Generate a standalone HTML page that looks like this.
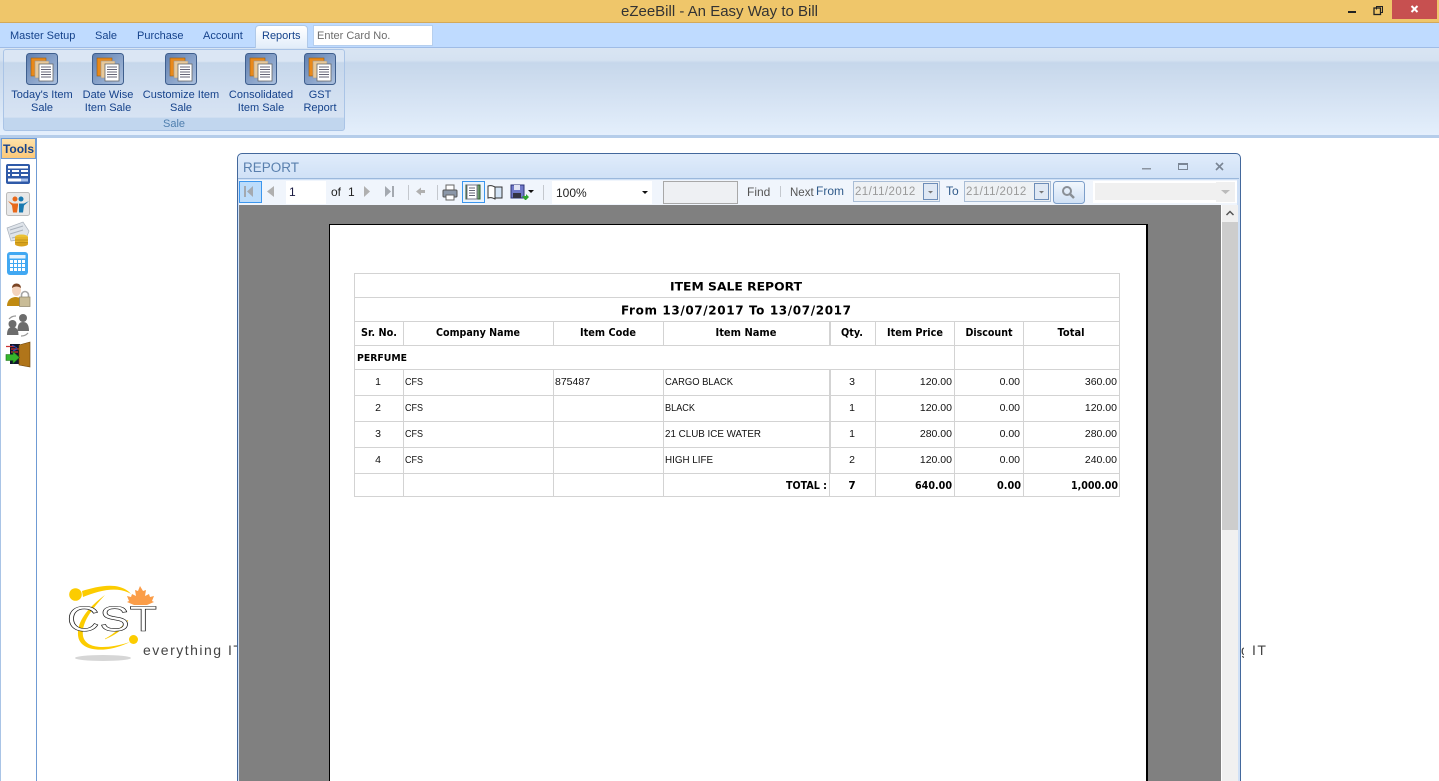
<!DOCTYPE html>
<html><head><meta charset="utf-8"><title>eZeeBill</title>
<style>
html,body{margin:0;padding:0;width:1439px;height:781px;overflow:hidden;background:#fff}
body{position:relative;font-family:"Liberation Sans",sans-serif}
.a{position:absolute}
.t{position:absolute;white-space:nowrap}
svg{position:absolute;left:0;top:0}
text{font-family:"Liberation Sans",sans-serif}
.dj text,text.dj{font-family:"DejaVu Sans",sans-serif}
</style></head><body>
<div class="a" style="left:0;top:0;width:1439px;height:22px;background:#efc66a"></div>
<div class="a" style="left:0;top:22px;width:1439px;height:1px;background:#d3a95a"></div>
<div class="t" style="left:0;width:1439px;top:3px;text-align:center;font-size:15px;color:#333">eZeeBill - An Easy Way to Bill</div>
<div class="a" style="left:1392px;top:0;width:45px;height:19px;background:#c75050"></div>
<div class="a" style="left:0;top:23px;width:1439px;height:24px;background:#bfdbff"></div>
<div class="a" style="left:0;top:47px;width:1439px;height:88px;background:linear-gradient(#d9e5f3 0,#d5e2f1 14%,#c6d7eb 17%,#d2e0f1 50%,#e4effc 100%);border-top:1px solid #9fbce6;box-sizing:border-box"></div>
<div class="a" style="left:255px;top:25px;width:53px;height:23px;box-sizing:border-box;background:linear-gradient(#fff,#e2edfa);border:1px solid #b0c9e8;border-bottom:0;border-radius:4px 4px 0 0"></div>
<div class="t" style="left:10px;top:30px;font-size:11px;color:#15428b">Master Setup</div>
<div class="t" style="left:95px;top:30px;font-size:11px;color:#15428b">Sale</div>
<div class="t" style="left:137px;top:30px;font-size:11px;color:#15428b">Purchase</div>
<div class="t" style="left:203px;top:30px;font-size:11px;color:#15428b">Account</div>
<div class="t" style="left:262px;top:30px;font-size:11px;color:#15428b">Reports</div>
<div class="a" style="left:313px;top:25px;width:120px;height:21px;box-sizing:border-box;background:#fff;border:1px solid #b6cfee"></div>
<div class="t" style="left:317px;top:30px;font-size:11px;color:#6d6d6d">Enter Card No.</div>
<div class="a" style="left:3px;top:49px;width:342px;height:82px;box-sizing:border-box;border:1px solid #aac4e6;border-radius:3px;background:linear-gradient(#dbe6f4 0,#dbe6f4 14%,#c6d7eb 16%,#d0def0 50%,#d7e3f3 84%,#c1d6ee 85%,#c1d6ee 100%)"></div>
<div class="t" style="left:11px;top:89px;width:62px;text-align:center;font-size:11px;line-height:13px;color:#15428b">Today's Item<br>Sale</div>
<div class="t" style="left:78px;top:89px;width:60px;text-align:center;font-size:11px;line-height:13px;color:#15428b">Date Wise<br>Item Sale</div>
<div class="t" style="left:141px;top:89px;width:80px;text-align:center;font-size:11px;line-height:13px;color:#15428b">Customize Item<br>Sale</div>
<div class="t" style="left:226px;top:89px;width:70px;text-align:center;font-size:11px;line-height:13px;color:#15428b">Consolidated<br>Item Sale</div>
<div class="t" style="left:300px;top:89px;width:40px;text-align:center;font-size:11px;line-height:13px;color:#15428b">GST<br>Report</div>
<div class="t" style="left:3px;top:118px;width:342px;text-align:center;font-size:11px;color:#4f7fae">Sale</div>
<div class="a" style="left:0;top:135px;width:1439px;height:3px;background:#b5cdea"></div>

<div class="a" style="left:0;top:138px;width:37px;height:643px;box-sizing:border-box;border-right:1px solid #6f9bd4;border-left:1px solid #a9c4e6;background:#fff"></div>
<div class="a" style="left:1px;top:138px;width:35px;height:21px;box-sizing:border-box;background:linear-gradient(#ffe2a8,#fbc878);border:1px solid #6f9bd4;text-align:center;font-size:12px;font-weight:bold;color:#15428b;line-height:21px">Tools</div>

<div class="t" style="left:143px;top:642px;font-size:14px;letter-spacing:1.5px;color:#444">everything IT</div>
<div class="t" style="left:1252px;top:642px;font-size:14px;letter-spacing:1.5px;color:#444">IT</div>
<div class="t" style="left:1241px;top:642px;width:3px;overflow:hidden;font-size:14px;color:#444">g</div>

<svg width="1439" height="781" viewBox="0 0 1439 781" style="z-index:1">
<defs>
<linearGradient id="ib" x1="0" y1="0" x2="1" y2="1"><stop offset="0" stop-color="#5f7fb0"/><stop offset="1" stop-color="#adc1de"/></linearGradient>
<symbol id="rib" viewBox="0 0 32 32" overflow="visible">
<rect x=".5" y=".5" width="31" height="31" rx="3" fill="url(#ib)" stroke="#3f5f8e"/>
<rect x="5" y="5" width="15" height="18" fill="#e9891a" stroke="#9a5c12" stroke-width=".6"/>
<rect x="9" y="8" width="14" height="17" fill="#e8c99a" stroke="#999" stroke-width=".6"/>
<rect x="13" y="11" width="14" height="17" fill="#fff" stroke="#666" stroke-width=".8"/>
<path d="M15 14h10M15 16.500h10M15 19h10M15 21.500h10M15 24h10" stroke="#667" stroke-width="1"/>
</symbol>
</defs>
<use href="#rib" x="26" y="53" width="32" height="32"/>
<use href="#rib" x="92" y="53" width="32" height="32"/>
<use href="#rib" x="165" y="53" width="32" height="32"/>
<use href="#rib" x="245" y="53" width="32" height="32"/>
<use href="#rib" x="304" y="53" width="32" height="32"/>
<!-- window buttons -->
<rect x="1348" y="11" width="8" height="2" fill="#222"/>
<path d="M1376.500 9.500v-3h6v6h-2" fill="none" stroke="#222" stroke-width="1"/><rect x="1374" y="8" width="6.500" height="6.500" fill="none" stroke="#222" stroke-width="1.300"/>
<path d="M1411.500 6l6 6M1417.500 6l-6 6" stroke="#fff" stroke-width="2"/>
<!-- tool icons -->
<g>
<rect x="6" y="164" width="24" height="20" rx="2" fill="#2f5aa8"/>
<path d="M8 166h20v2.500H8zM8 170h2v2H8zM12 170h7v2h-7zM21 170h7v2h-7zM8 174h2v2H8zM12 174h7v2h-7zM21 174h7v2h-7zM8 178.500h13v3H8z" fill="#fff"/><rect x="21" y="178.500" width="7" height="3" fill="#a8c0ea"/>
<rect x="6.500" y="192.500" width="23" height="23" rx="2" fill="#e8e8e8" stroke="#bbb"/>
<circle cx="15" cy="199" r="2.500" fill="#e8691a"/><circle cx="21" cy="199" r="2.500" fill="#1a7ab0"/>
<path d="M8 201l5 2.500h5v2l-1 7h-4l-1-7z" fill="#e8691a"/><path d="M29 201l-5 2.500h-5v9h4l1-7z" fill="#1a7ab0"/>
<path d="M7 228l16-6 6 9-3 8-15 2z" fill="#dfe4ea" stroke="#aab2bc" stroke-width=".7"/><path d="M10 230l13-4M10 234l13-4M12 238l8-2" stroke="#aab2bc"/>
<ellipse cx="21.500" cy="237" rx="6.500" ry="2.500" fill="#eac235"/><rect x="15" y="237" width="13" height="7" fill="#e5b52c"/><ellipse cx="21.500" cy="244" rx="6.500" ry="2.500" fill="#d7a11c"/><path d="M15 240h13M15 242.500h13" stroke="#b98b15" stroke-width=".7"/>
<rect x="7" y="252" width="21" height="23" rx="3" fill="#41a8f2"/><rect x="9.500" y="255" width="16" height="3.500" fill="#e6f3fd"/>
<path d="M10 260h3v3h-3zM14 260h3v3h-3zM18 260h3v3h-3zM22 260h3v3h-3zM10 264h3v3h-3zM14 264h3v3h-3zM18 264h3v3h-3zM22 264h3v3h-3zM10 268h3v3h-3zM14 268h3v3h-3zM18 268h3v3h-3zM22 268h3v3h-3z" fill="#fff"/>
<ellipse cx="16.500" cy="290" rx="4.500" ry="6" fill="#f3d3bd"/><path d="M12 288c0-6 9-6 9 0-3-2-6-2-9 0z" fill="#7a4525"/>
<path d="M7 306c0-6 4-9 9-9l5 1v8H7z" fill="#c08a10"/>
<path d="M21.500 298v-3a3.500 3.500 0 0 1 7 0v3" fill="none" stroke="#a6a6a6" stroke-width="1.600"/><rect x="19.500" y="297" width="10.500" height="9.500" fill="#c9bc97" stroke="#8d8468" stroke-width=".7"/>
<g fill="#6c6c6c"><circle cx="23" cy="318" r="4"/><path d="M17.500 331c0-7 2-9 5.500-9s6 2 6 9z"/><circle cx="12.500" cy="324" r="4"/><path d="M7 335c0-6 2-8 5.500-8s6 2 6 8z"/></g>
<path d="M9 319a9 9 0 0 1 7-3M28 333a9 9 0 0 1-7 3" fill="none" stroke="#999" stroke-width="1.300"/>
<rect x="10" y="344" width="10" height="20" fill="#10162e"/><path d="M6 346.500h9M11 349h8M11 352h7" stroke="#c33" stroke-width="1.300"/><path d="M12 345l5 3M13 351l4-2" stroke="#2c4fc0"/>
<path d="M19 345l11-3v25l-11-2z" fill="#b0751a" stroke="#6b430a" stroke-width=".6"/>
<path d="M6 354.500h7v-3l6.500 6-6.500 6v-3H6z" fill="#35b62c" stroke="#1c6d14" stroke-width=".6"/>
</g>
<!-- logo -->
<ellipse cx="103" cy="658" rx="28" ry="3" fill="#d6d6d6"/>
<circle cx="75.500" cy="594.500" r="6.300" fill="#fccc00"/><circle cx="133.500" cy="639.500" r="4.500" fill="#fccc00"/>
<path d="M82 591C98 586 120 581 131 594C118 586 100 590 83 597Z" fill="#fccc00"/>
<path d="M105 595C90 606 77 620 78 635C79 652 106 654 130 642C108 649 86 650 83 636C81 622 93 608 105 595Z" fill="#fccc00"/>
<path d="M128 620C121 628 114 634 105 639C115 635 124 629 128 620Z" fill="#fccc00" stroke="#fccc00" stroke-width=".5"/>
<path d="M140 586l3 5 3-1-1 6 4-2 1 3 4-1-2 5 2 1-7 3-6 0-1 0-6 0-7-3 2-1-2-5 4 1 1-3 4 2-1-6 3 1z" fill="#fb9d48"/>
<text x="67" y="631" font-size="35" fill="#fff" stroke="#111" stroke-width=".6" textLength="90" lengthAdjust="spacingAndGlyphs">CST</text>
</svg>

<!-- report window -->
<div class="a" style="left:237px;top:153px;width:1004px;height:640px;box-sizing:border-box;border:1px solid #43689c;border-radius:5px 5px 0 0;background:linear-gradient(#e0ecfb,#cfe0f6 26px);z-index:2"></div>
<div class="a" style="left:238px;top:178px;width:1001px;height:603px;background:#cfe0f6;z-index:2"></div>
<div class="a" style="left:238px;top:178px;width:1001px;height:1px;background:#9bb8dc;z-index:2"></div>
<div class="a" style="left:239px;top:180px;width:998px;height:25px;background:#f0f5fc;z-index:2"></div>
<div class="a" style="left:239px;top:205px;width:982px;height:576px;background:#808080;z-index:2"></div>
<div class="a" style="left:1221px;top:205px;width:1px;height:576px;background:#fff;z-index:2"></div>
<div class="a" style="left:1222px;top:205px;width:16px;height:576px;background:#f0f0f0;z-index:2"></div>
<div class="a" style="left:1222px;top:222px;width:16px;height:308px;background:#cdcdcd;z-index:2"></div>
<div class="a" style="left:329px;top:224px;width:819px;height:560px;box-sizing:border-box;background:#fff;border:1.500px solid #000;border-right-width:2px;z-index:2"></div>

<svg width="1439" height="781" viewBox="0 0 1439 781" style="z-index:3">
<text x="243" y="172" font-size="13.500" fill="#5a80ae">REPORT</text>
<rect x="1142" y="168" width="9" height="1.500" fill="#8a93a0"/>
<rect x="1178.500" y="163.500" width="9" height="6" fill="none" stroke="#7a8594"/><rect x="1178" y="163" width="10" height="2" fill="#7a8594"/>
<path d="M1216 163l7 7M1223 163l-7 7" stroke="#7a8594" stroke-width="1.600"/>
<!-- toolbar -->
<rect x="239.500" y="181.500" width="22" height="21" fill="#bcdcfb" stroke="#3b96ee"/>
<path d="M244 186v11h2v-11zM253 186l-6 5.500 6 5.500z" fill="#a4a9b0"/>
<path d="M274 186l-7 5.500 7 5.500z" fill="#b0b0b0"/>
<rect x="286" y="181" width="40" height="23" fill="#fff"/>
<text x="289" y="196" font-size="12" fill="#1a1a40">1</text>
<text x="331" y="196" font-size="12" fill="#222">of</text><text x="348" y="196" font-size="12" fill="#222">1</text>
<path d="M364 186l6 5.500-6 5.500z" fill="#b0b0b0"/><path d="M385 186l6 5.500-6 5.500zM392 186v11h2v-11z" fill="#a4a9b0"/>
<path d="M408.500 185v15M437.500 185v15M543.500 185v15" stroke="#c4c8ce"/>
<path d="M416 191.500l5-4v2.500h4v3h-4v2.500z" fill="#b0b0b0"/>
<path d="M446 185h8v5h-8z" fill="#fff" stroke="#666"/><rect x="443" y="190" width="14" height="7" rx="1" fill="#8b97a8" stroke="#555"/><rect x="446" y="195" width="8" height="5" fill="#fff" stroke="#666"/>
<rect x="462.500" y="181.500" width="22" height="21" fill="#e9f3fd" stroke="#3b96ee"/>
<rect x="466" y="185" width="14" height="14" fill="#6c9a6c" stroke="#2f5a2f"/><rect x="467" y="185" width="10" height="14" fill="#fff" stroke="#778"/>
<path d="M469 188h6M469 190.500h6M469 193h6M469 195.500h6" stroke="#667"/>
<path d="M488 186c3-1 5 0 7 1v12c-2-1-4-2-7-1z" fill="#fff" stroke="#333"/><path d="M495 187h7v11h-7z" fill="#d4e4f6" stroke="#333"/>
<rect x="511" y="185" width="13" height="13" fill="#6f78c8" stroke="#2c3277"/><rect x="514" y="185" width="6" height="5" fill="#e0e4f4"/><rect x="513" y="193" width="8" height="5" fill="#334"/>
<path d="M522 196h4v-2l3 3-3 3-1 0z" fill="#2fa52f"/>
<path d="M528 190h6l-3 3z" fill="#111"/>
<rect x="552" y="181" width="100" height="23" fill="#fff"/>
<text x="556" y="197" font-size="12" fill="#222">100%</text>
<path d="M642 191h6l-3 3z" fill="#111"/>
<rect x="663.500" y="181.500" width="74" height="22" fill="#eef0f3" stroke="#a8a8a8"/>
<text x="747" y="196" font-size="12" fill="#555">Find</text>
<path d="M780.500 186v11" stroke="#c4c8ce"/>
<text x="790" y="196" font-size="11.500" fill="#555">Next</text>
<text x="816" y="195" font-size="12" fill="#2f5a8a">From</text>
<rect x="853.500" y="181.500" width="86" height="20" fill="#eef1f4" stroke="#a9bdd6"/>
<text x="855" y="195" font-size="11.500" fill="#9a9a9a" letter-spacing=".4">21/11/2012</text>
<rect x="923.500" y="183.500" width="14" height="16" fill="#dfe8f4" stroke="#6d8db8"/><path d="M928 191h5l-2.500 2.500z" fill="#777"/>
<text x="946" y="195" font-size="12" fill="#2f5a8a">To</text>
<rect x="964.500" y="181.500" width="86" height="20" fill="#eef1f4" stroke="#a9bdd6"/>
<text x="966" y="195" font-size="11.500" fill="#9a9a9a" letter-spacing=".4">21/11/2012</text>
<rect x="1034.500" y="183.500" width="14" height="16" fill="#dfe8f4" stroke="#6d8db8"/><path d="M1039 191h5l-2.500 2.500z" fill="#777"/>
<defs><linearGradient id="sb" x1="0" y1="0" x2="0" y2="1"><stop offset="0" stop-color="#f2f7fd"/><stop offset="1" stop-color="#cfe0f5"/></linearGradient></defs>
<rect x="1053.500" y="181.500" width="31" height="22" rx="3" fill="url(#sb)" stroke="#7d9fca"/>
<circle cx="1067" cy="191" r="4" fill="none" stroke="#8a8f96" stroke-width="2"/><path d="M1070 194l4 4" stroke="#8a8f96" stroke-width="2.500"/>
<rect x="1093" y="181" width="144" height="22" fill="#fff"/>
<rect x="1095" y="183" width="121" height="17" fill="#f0f0f0"/>
<rect x="1216" y="182" width="19" height="20" fill="#f0f0f0"/><path d="M1221 190h9l-4.500 4z" fill="#bbb"/>
<path d="M1226.500 215l3.500-3.500 3.500 3.500" fill="none" stroke="#555" stroke-width="1.500"/>
<!-- table lines -->
<g stroke="#d3d3d3" stroke-width="1" fill="none">
<rect x="354.500" y="273.500" width="765" height="223"/>
<path d="M354 297.500h765M354 321.500h765M354 345.500h765M354 369.500h765M354 395.500h765M354 421.500h765M354 447.500h765M354 473.500h765"/>
<path d="M403.500 321v24M403.500 369v127M553.500 321v24M553.500 369v127M663.500 321v24M663.500 369v127M875.500 321v24M875.500 369v127M954.500 321v175M1023.500 321v175"/>
<path d="M830 321v24M830 369v104" stroke-width="2"/><path d="M829.500 473v23"/>
</g>
<g class="dj" font-weight="bold" fill="#000" text-anchor="middle" font-size="10.500">
<text x="736" y="290.500" font-size="11.500" textLength="132" lengthAdjust="spacingAndGlyphs">ITEM SALE REPORT</text>
<text x="736" y="314.500" font-size="12" textLength="230" lengthAdjust="spacing">From 13/07/2017 To 13/07/2017</text>
<text x="379" y="336" textLength="36" lengthAdjust="spacingAndGlyphs">Sr. No.</text><text x="478" y="336" textLength="84" lengthAdjust="spacingAndGlyphs">Company Name</text><text x="608" y="336" textLength="56" lengthAdjust="spacingAndGlyphs">Item Code</text><text x="746" y="336" textLength="61" lengthAdjust="spacingAndGlyphs">Item Name</text><text x="852" y="336" textLength="22" lengthAdjust="spacingAndGlyphs">Qty.</text><text x="915" y="336" textLength="56" lengthAdjust="spacingAndGlyphs">Item Price</text><text x="989" y="336" textLength="47" lengthAdjust="spacingAndGlyphs">Discount</text><text x="1071" y="336" textLength="27" lengthAdjust="spacingAndGlyphs">Total</text>
</g>
<text class="dj" x="357" y="361" font-size="10" font-weight="bold" fill="#000" textLength="50" lengthAdjust="spacingAndGlyphs">PERFUME</text>
<g font-size="10.500" fill="#111">
<g text-anchor="middle"><text x="378" y="385">1</text><text x="378" y="411">2</text><text x="378" y="437">3</text><text x="378" y="463">4</text><text x="852" y="385">3</text><text x="852" y="411">1</text><text x="852" y="437">1</text><text x="852" y="463">2</text></g>
<text x="405" y="385" textLength="18" lengthAdjust="spacingAndGlyphs">CFS</text><text x="405" y="411" textLength="18" lengthAdjust="spacingAndGlyphs">CFS</text><text x="405" y="437" textLength="18" lengthAdjust="spacingAndGlyphs">CFS</text><text x="405" y="463" textLength="18" lengthAdjust="spacingAndGlyphs">CFS</text>
<text x="555" y="385">875487</text>
<text x="665" y="385" textLength="68" lengthAdjust="spacingAndGlyphs">CARGO BLACK</text><text x="665" y="411" textLength="30" lengthAdjust="spacingAndGlyphs">BLACK</text><text x="665" y="437" textLength="96" lengthAdjust="spacingAndGlyphs">21 CLUB ICE WATER</text><text x="665" y="463" textLength="48" lengthAdjust="spacingAndGlyphs">HIGH LIFE</text>
<g text-anchor="end">
<text x="952" y="385">120.00</text><text x="952" y="411">120.00</text><text x="952" y="437">280.00</text><text x="952" y="463">120.00</text>
<text x="1020" y="385">0.00</text><text x="1020" y="411">0.00</text><text x="1020" y="437">0.00</text><text x="1020" y="463">0.00</text>
<text x="1117" y="385">360.00</text><text x="1117" y="411">120.00</text><text x="1117" y="437">280.00</text><text x="1117" y="463">240.00</text>
</g></g>
<g class="dj" font-size="10.500" font-weight="bold" fill="#000">
<text x="786" y="489" textLength="41" lengthAdjust="spacingAndGlyphs">TOTAL :</text><text x="852" y="489" text-anchor="middle">7</text>
<text x="915" y="489" textLength="37" lengthAdjust="spacingAndGlyphs">640.00</text><text x="997" y="489" textLength="24" lengthAdjust="spacingAndGlyphs">0.00</text><text x="1071" y="489" textLength="47" lengthAdjust="spacingAndGlyphs">1,000.00</text>
</g>
</svg>
</body></html>
